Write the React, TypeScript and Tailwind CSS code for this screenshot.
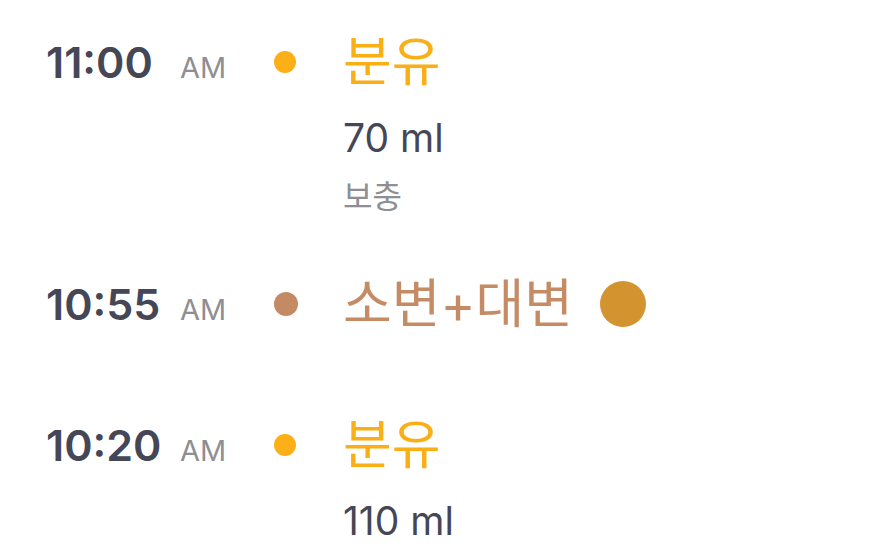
import React from 'react'

type Entry = {
  time: string
  title: string
  titleColor: string
  dotClass: string
  lines?: { text: string; className: string }[]
  badge?: boolean
}

const entries: Entry[] = [
  {
    time: '11:00',
    title: '분유',
    titleColor: 'text-[#fbaf17]',
    dotClass: 'w-[22px] h-[22px] bg-[#fcaf17]',
    lines: [
      { text: '70 ml', className: 'mt-[24px] h-[48px] leading-[48px] text-[39px] text-[#454757]' },
      { text: '보충', className: 'mt-[15px] h-[40px] leading-[40px] text-[32px] text-[#8e8e93]' },
    ],
  },
  {
    time: '10:55',
    title: '소변+대변',
    titleColor: 'text-[#c48b64]',
    dotClass: 'w-[24px] h-[24px] bg-[#c48a63]',
    badge: true,
  },
  {
    time: '10:20',
    title: '분유',
    titleColor: 'text-[#fbaf17]',
    dotClass: 'w-[22px] h-[22px] bg-[#fcaf17]',
    lines: [{ text: '110 ml', className: 'mt-[24px] h-[48px] leading-[48px] text-[39px] text-[#454757]' }],
  },
]

export default function App() {
  return (
    <div
      className="w-[885px] h-[558px] overflow-hidden bg-white pt-[34px] pl-[46px]"
      style={{ fontFamily: 'Inter, "Noto Sans CJK KR", sans-serif' }}
    >
      {entries.map((e) => (
        <div key={e.time} className="flex pb-[59px]">
          <div className="flex h-[56px] items-center">
            <div className="flex w-[228px] items-baseline">
              <span className="w-[134px] text-[43px] font-semibold text-[#454757] leading-none">{e.time}</span>
              <span className="text-[29px] text-[#8e8e93] leading-none">AM</span>
            </div>
            <div className="w-[69px]">
              <div className={`rounded-full ${e.dotClass}`} />
            </div>
          </div>
          <div className="min-h-[82px]">
            <div className="flex h-[56px] items-center gap-[27px]">
              <span className={`text-[53px] font-normal leading-none ${e.titleColor}`}>{e.title}</span>
              {e.badge && <div className="h-[46px] w-[46px] rounded-full bg-[#d3932f]" />}
            </div>
            {e.lines?.map((l) => (
              <div key={l.text} className={l.className}>
                {l.text}
              </div>
            ))}
          </div>
        </div>
      ))}
    </div>
  )
}
